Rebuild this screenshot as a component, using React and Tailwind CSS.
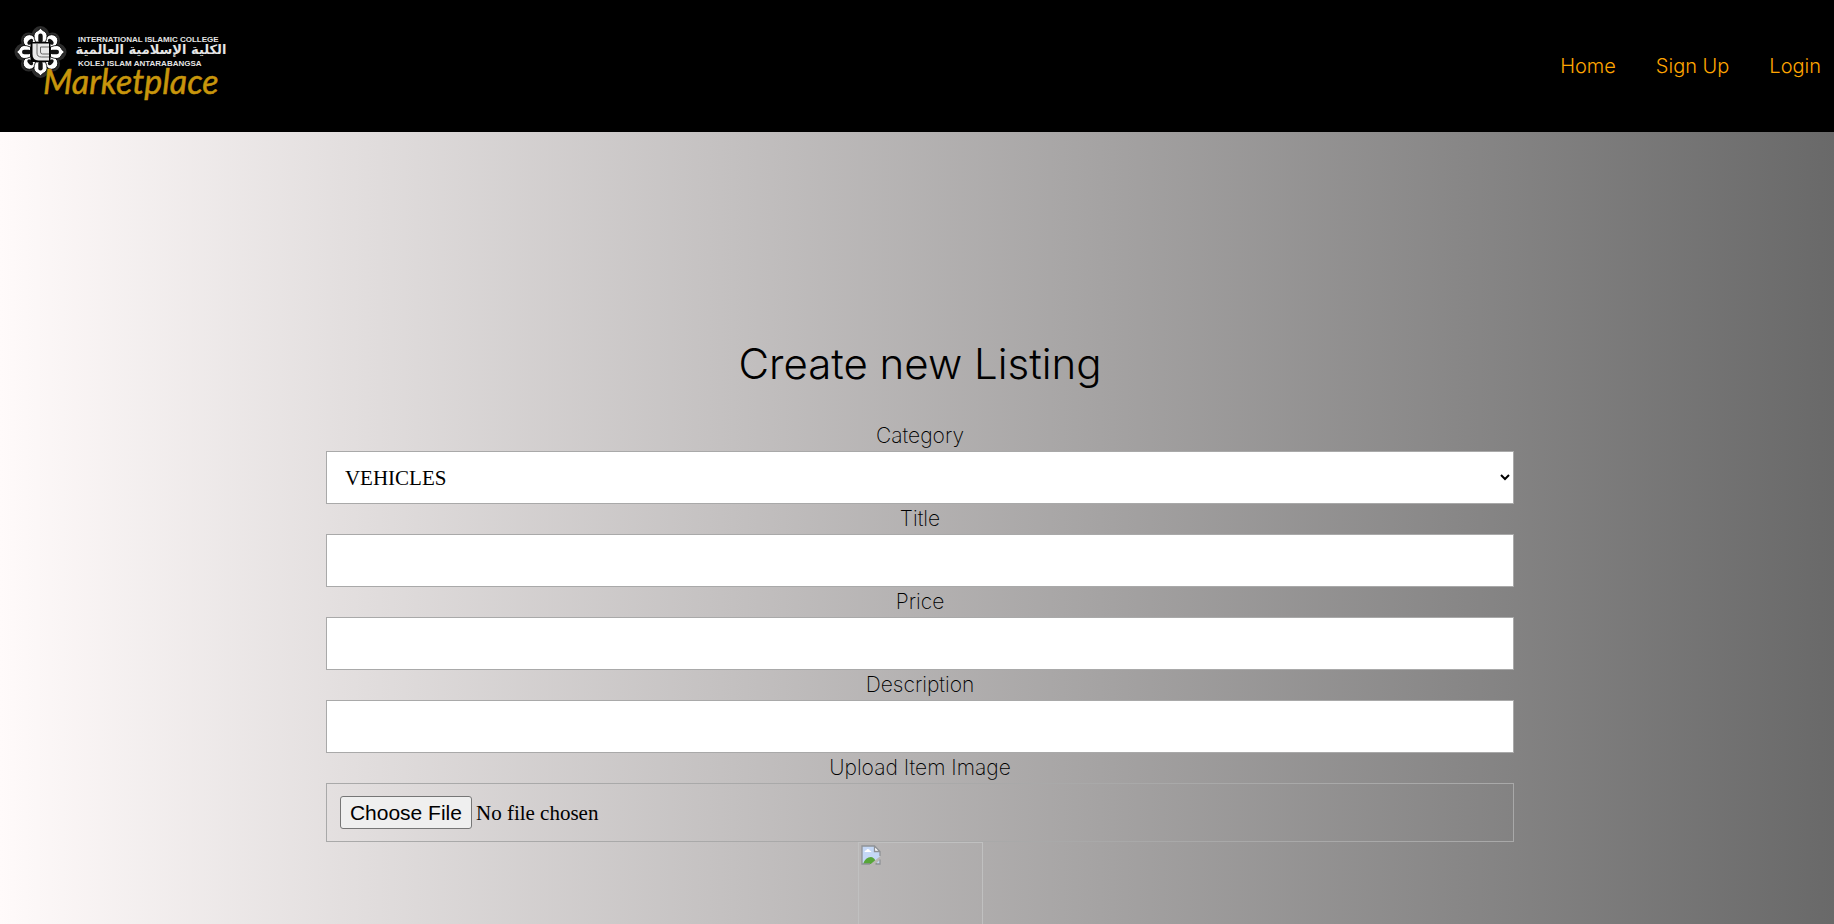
const NAV_LINKS = ["Home", "Sign Up", "Login"];
const CATEGORIES = ["VEHICLES", "PROPERTY", "ELECTRONICS", "BOOKS", "SERVICES"];
const PETALS = [0, 90, 180, 270];
const DIAGONALS = [45, 135, 225, 315];

const fieldClass =
  "block h-[53px] w-full border border-[#a9a9a9] bg-white px-[14px] font-['Liberation_Serif',serif] text-[21px] text-black";

function Logo() {
  return (
    <svg width="240" height="132" viewBox="0 0 240 132" role="img" aria-label="International Islamic College Marketplace">
      <g transform="translate(40.5 52)">
        <g fill="#2c2c2c">
          {PETALS.map((a) => (
            <ellipse key={a} cx="0" cy="-16" rx="9" ry="10" transform={`rotate(${a})`} />
          ))}
          {DIAGONALS.map((a) => (
            <ellipse key={a} cx="0" cy="-16" rx="8" ry="8.5" transform={`rotate(${a})`} />
          ))}
        </g>
        <g fill="#fff" stroke="#000" strokeWidth="0.8">
          {DIAGONALS.map((a) => (
            <ellipse key={a} cx="0" cy="-15.5" rx="6.2" ry="6.5" transform={`rotate(${a})`} />
          ))}
          {PETALS.map((a) => (
            <path key={a} d="M-5 -10 Q-8.5 -18 -4 -20.5 Q-1.5 -21.5 0 -24 Q1.5 -21.5 4 -20.5 Q8.5 -18 5 -10 Z" transform={`rotate(${a})`} />
          ))}
        </g>
        <g fill="#111">
          {PETALS.map((a) => (
            <rect key={a} x="-2.2" y="-18.5" width="4.4" height="9" rx="2.2" transform={`rotate(${a})`} />
          ))}
          {DIAGONALS.map((a) => (
            <ellipse key={a} cx="0" cy="-14.5" rx="3.4" ry="2" transform={`rotate(${a})`} />
          ))}
        </g>
        <rect x="-10" y="-10" width="20" height="20" rx="2" fill="#000" />
        <path d="M-8 -8.5 H8.5 V8.5 H-2 Q-8 8.5 -8 2 Z" fill="#e8e8e8" />
        <path d="M-3.5 -8.5 V1 Q-3.5 5 1 5 H8.5 M0 -5 V0 Q0 2 2 2 H8.5 M0 -5 H8.5" fill="none" stroke="#666" strokeWidth="1" />
      </g>
      <g fill="#e4e4e4" fontFamily="'Liberation Sans', sans-serif">
        <text x="78" y="42" fontSize="8" fontWeight="700">INTERNATIONAL ISLAMIC COLLEGE</text>
        <text x="151" y="54" fontSize="13" fontWeight="700" textAnchor="middle" fontFamily="'DejaVu Sans', sans-serif">الكلية الإسلامية العالمية</text>
        <text x="78" y="66" fontSize="8" fontWeight="700">KOLEJ ISLAM ANTARABANGSA</text>
      </g>
      <text x="43" y="94" fontSize="34" fontStyle="italic" fill="#c8960c" stroke="#c8960c" strokeWidth="0.5" fontFamily="Lato, sans-serif">Marketplace</text>
    </svg>
  );
}

function MissingImageIcon() {
  return (
    <svg width="20" height="20" viewBox="0 0 20 20" aria-hidden="true">
      <path d="M1 1 H13.5 L19 6.5 V19 H1 Z" fill="#c5d8f6" />
      <path d="M3.5 7 Q3.5 5.2 5.3 5.2 Q6 3.3 7.7 4.2 Q9 4.5 8.8 5.7 Q10.4 5.6 10.4 7 Z" fill="#fff" />
      <path d="M2 19 Q4.5 12 10 12 Q13.5 12 16 19 Z" fill="#57a639" />
      <path d="M8.5 20 L20 10.5 V14 L13.5 20 Z" fill="#b9b6b5" />
      <path d="M13.5 1 V6.5 H19 Z" fill="#fff" />
      <path d="M9 19 H1 V1 H13.5 L19 6.5 V11 M13.5 1 V6.5 H19 M19 14.5 V19 H14.5" fill="none" stroke="#8f9296" strokeWidth="1.3" />
    </svg>
  );
}

function Field({ id, label, children }) {
  return (
    <div>
      <label htmlFor={id} className="block text-center text-[21px] leading-[30px] font-extralight text-black">
        {label}
      </label>
      {children}
    </div>
  );
}

export default function App() {
  return (
    <div className="min-h-screen bg-linear-to-r/srgb from-[#fffafa] to-[#696969] font-[Inter,sans-serif]">
      <header className="flex items-center justify-between bg-black pr-[13px]">
        <a href="#home">
          <Logo />
        </a>
        <nav className="flex gap-10 text-[20px] font-light text-[#ffa500]">
          {NAV_LINKS.map((name) => (
            <a key={name} href="#nav">
              {name}
            </a>
          ))}
        </nav>
      </header>
      <main className="flex flex-col items-center pt-[202px] pl-[6px]">
        <h1 className="mb-[27px] text-[42px] leading-[60px] font-light text-black">Create new Listing</h1>
        <form className="w-[65%]">
          <Field id="category" label="Category">
            <select id="category" className={fieldClass}>
              {CATEGORIES.map((c) => (
                <option key={c}>{c}</option>
              ))}
            </select>
          </Field>
          <Field id="title" label="Title">
            <input id="title" type="text" className={fieldClass} />
          </Field>
          <Field id="price" label="Price">
            <input id="price" type="text" className={fieldClass} />
          </Field>
          <Field id="description" label="Description">
            <input id="description" type="text" className={fieldClass} />
          </Field>
          <Field id="image" label="Upload Item Image">
            <input
              id="image"
              type="file"
              className="block w-full border border-[#a9a9a9] px-[13px] py-3 font-['Liberation_Serif',serif] text-[21px] leading-[23px] text-black file:rounded-[3px] file:border file:border-solid file:border-[#767676] file:bg-[#efefef] file:px-[9px] file:py-1 file:font-['Liberation_Sans',sans-serif] file:text-[21px] file:text-black"
            />
          </Field>
          <div className="mx-auto h-[125px] w-[125px] border border-[#c0c0c0] p-[2px]">
            <MissingImageIcon />
          </div>
        </form>
      </main>
    </div>
  );
}
